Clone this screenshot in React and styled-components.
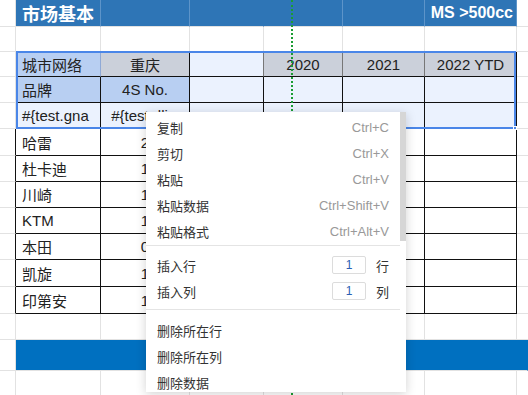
import React from 'react';
import styled, { createGlobalStyle } from 'styled-components';

const GRID = '#e2e2e2';
const INK = '#111';
const SEL = '#ebf2fe';
const HEAD = '#cbd0da';
const KEY = '#b8cff2';

const GlobalStyle = createGlobalStyle`
  * { box-sizing: border-box; }
  body {
    margin: 0;
    background: #fff;
    font-family: "Liberation Sans", "Noto Sans CJK SC", sans-serif;
  }
`;

const Page = styled.div`
  position: relative;
  width: 528px;
  height: 395px;
  overflow: hidden;
  background: #fff;
`;

const Sheet = styled.div`
  display: flex;
  flex-direction: column;
`;

const Row = styled.div`
  display: grid;
  grid-template-columns: 16px 85px 89px 74px 79px 82px 92px 11px;
  height: ${p => p.$h}px;
  flex: none;
`;

const Cell = styled.div`
  display: flex;
  align-items: center;
  justify-content: ${p => (p.$center ? 'center' : p.$right ? 'flex-end' : 'flex-start')};
  padding: 0 ${p => (p.$right ? '3px' : '6px')};
  grid-column: ${p => (p.$span ? `span ${p.$span}` : 'auto')};
  background: ${p => p.$bg || '#fff'};
  border-right: 1px solid ${p => p.$vr || GRID};
  border-bottom: 1px solid ${p => p.$hr || GRID};
  font-size: 15px;
  color: #222;
  white-space: nowrap;
  overflow: hidden;
`;

const Title = styled.span`
  color: #fff;
  font-weight: bold;
  font-size: ${p => (p.$small ? 16 : 18)}px;
`;

const GuideLine = styled.div`
  position: absolute;
  left: 291px;
  top: 0;
  bottom: 0;
  border-left: 2px dotted #1a9c33;
`;

const Selection = styled.div`
  position: absolute;
  left: 16px;
  top: 51px;
  width: 500px;
  height: 78px;
  border: 2px solid #4a86e8;
  pointer-events: none;
`;

const Handle = styled.div`
  position: absolute;
  left: 513px;
  top: 126px;
  width: 4px;
  height: 4px;
  background: #4a86e8;
  border: 1px solid #fff;
`;

const Menu = styled.div`
  position: absolute;
  left: 146px;
  top: 112px;
  width: 260px;
  height: 280px;
  background: #fff;
  box-shadow: 0 2px 10px rgba(0, 0, 0, 0.18);
  overflow: hidden;
  display: flex;
`;

const MenuList = styled.div`
  flex: 1;
  display: flex;
  flex-direction: column;
  padding-top: 2px;
`;

const ScrollTrack = styled.div`
  width: 6px;
  flex: none;
  display: flex;
  flex-direction: column;
`;

const ScrollThumb = styled.div`
  height: 129px;
  background: #d6d6d6;
`;

const MenuItem = styled.div`
  flex: none;
  height: 26px;
  display: flex;
  align-items: center;
  justify-content: space-between;
  padding: 0 11px;
  font-size: 13px;
  color: #333;
  font-family: "Noto Sans CJK SC", "Liberation Sans", sans-serif;
`;

const Shortcut = styled.span`
  color: #999;
  font-family: "Liberation Sans", sans-serif;
`;

const Divider = styled.div`
  flex: none;
  height: 1px;
  background: #e4e4e4;
  margin: ${p => (p.$first ? '1px 0 6px' : '5px 0 7px')};
`;

const Count = styled.div`
  display: flex;
  align-items: center;
  gap: 10px;
`;

const CountBox = styled.div`
  width: 34px;
  height: 18px;
  border: 1px solid #dcdcdc;
  border-radius: 2px;
  display: flex;
  align-items: center;
  justify-content: center;
  font-family: "Liberation Sans", sans-serif;
  font-size: 12px;
  color: #2b5fb3;
`;

const blank = (h, key) => (
  <Row $h={h} key={key}>
    {Array.from({ length: 8 }).map((_, i) => (
      <Cell key={i} />
    ))}
  </Row>
);

const brands = [
  ['哈雷', '2', 27],
  ['杜卡迪', '1', 26],
  ['川崎', '1', 26],
  ['KTM', '1', 26],
  ['本田', '0', 26],
  ['凯旋', '1', 27],
  ['印第安', '1', 27],
];

export default function App() {
  return (
    <Page>
      <GlobalStyle />
      <Sheet>
        <Row $h={27}>
          <Cell />
          <Cell $bg="#2e75b6" $vr="#5d94c9"><Title>市场基本</Title></Cell>
          <Cell $bg="#2e75b6" $vr="#5d94c9" />
          <Cell $bg="#2e75b6" $vr="#2e75b6" />
          <Cell $bg="#2e75b6" $vr="#5d94c9" />
          <Cell $bg="#2e75b6" $vr="#5d94c9" />
          <Cell $bg="#2e75b6" $vr="#5d94c9" $right><Title $small>MS &gt;500cc</Title></Cell>
          <Cell />
        </Row>
        {blank(25, 'r2')}
        <Row $h={25}>
          <Cell />
          <Cell $bg={KEY} $vr="#8fa9d6" $hr={INK}>城市网络</Cell>
          <Cell $bg={HEAD} $vr={INK} $hr={INK} $center>重庆</Cell>
          <Cell $bg={SEL} $vr="#777" $hr={INK} />
          <Cell $bg={HEAD} $vr="#777" $hr={INK} $center>2020</Cell>
          <Cell $bg={HEAD} $vr="#777" $hr={INK} $center>2021</Cell>
          <Cell $bg={HEAD} $vr={INK} $hr={INK} $center>2022 YTD</Cell>
          <Cell />
        </Row>
        <Row $h={26}>
          <Cell />
          <Cell $bg={KEY} $vr={INK} $hr={INK}>品牌</Cell>
          <Cell $bg={KEY} $vr={INK} $hr={INK} $center>4S No.</Cell>
          <Cell $bg={SEL} $vr={INK} $hr={INK} />
          <Cell $bg={SEL} $vr={INK} $hr={INK} />
          <Cell $bg={SEL} $vr={INK} $hr={INK} />
          <Cell $bg={SEL} $vr={INK} $hr={INK} />
          <Cell />
        </Row>
        <Row $h={26}>
          <Cell />
          <Cell $bg={SEL} $vr={INK} $hr={INK}>#&#123;test.gna</Cell>
          <Cell $bg={SEL} $vr={INK} $hr={INK}>&nbsp;#&#123;test.dli</Cell>
          <Cell $bg={SEL} $vr={INK} $hr={INK} />
          <Cell $bg={SEL} $vr={INK} $hr={INK} />
          <Cell $bg={SEL} $vr={INK} $hr={INK} />
          <Cell $bg={SEL} $vr={INK} $hr={INK} />
          <Cell />
        </Row>
        {brands.map(([name, n, h]) => (
          <Row $h={h} key={name}>
            <Cell $vr={INK} />
            <Cell $vr={INK} $hr={INK}>{name}</Cell>
            <Cell $vr={INK} $hr={INK} $center>{n}</Cell>
            <Cell $vr={INK} $hr={INK} />
            <Cell $vr={INK} $hr={INK} />
            <Cell $vr={INK} $hr={INK} />
            <Cell $vr={INK} $hr={INK} />
            <Cell />
          </Row>
        ))}
        {blank(26, 'r13')}
        <Row $h={31}>
          <Cell />
          <Cell $span={7} $bg="#0070c0" $vr="#0070c0" $hr={GRID} />
        </Row>
        {blank(26, 'r15')}
      </Sheet>

      <GuideLine />
      <Selection />
      <Handle />

      <Menu>
        <MenuList>
          <MenuItem>复制<Shortcut>Ctrl+C</Shortcut></MenuItem>
          <MenuItem>剪切<Shortcut>Ctrl+X</Shortcut></MenuItem>
          <MenuItem>粘贴<Shortcut>Ctrl+V</Shortcut></MenuItem>
          <MenuItem>粘贴数据<Shortcut>Ctrl+Shift+V</Shortcut></MenuItem>
          <MenuItem>粘贴格式<Shortcut>Ctrl+Alt+V</Shortcut></MenuItem>
          <Divider $first />
          <MenuItem>
            插入行
            <Count><CountBox>1</CountBox>行</Count>
          </MenuItem>
          <MenuItem>
            插入列
            <Count><CountBox>1</CountBox>列</Count>
          </MenuItem>
          <Divider />
          <MenuItem>删除所在行</MenuItem>
          <MenuItem>删除所在列</MenuItem>
          <MenuItem>删除数据</MenuItem>
        </MenuList>
        <ScrollTrack>
          <ScrollThumb />
        </ScrollTrack>
      </Menu>
    </Page>
  );
}
